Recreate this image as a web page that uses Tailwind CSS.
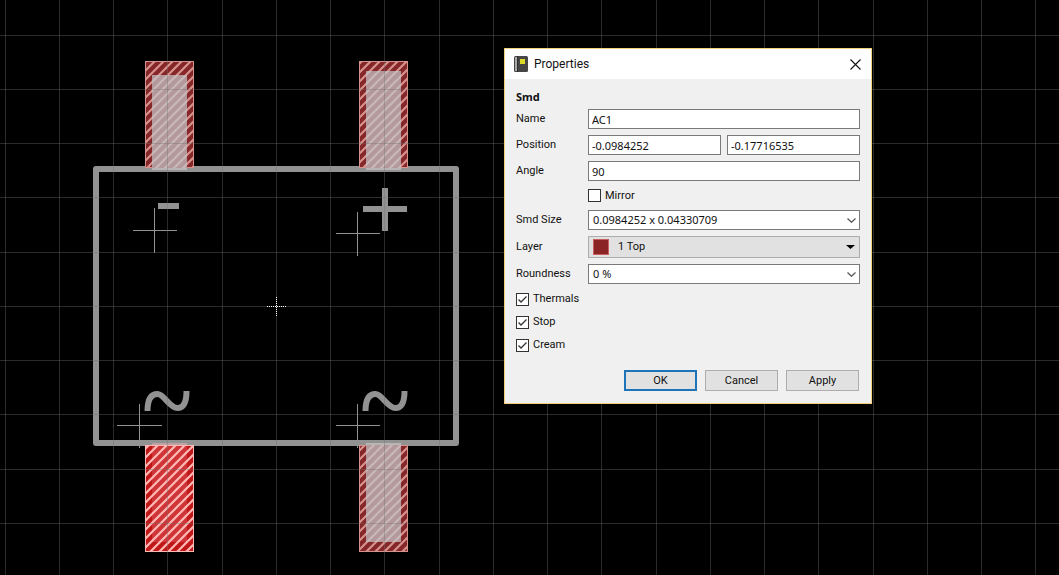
<!DOCTYPE html>
<html lang="en">
<head>
<meta charset="utf-8">
<meta name="viewport" content="width=device-width, initial-scale=1">
<title>Properties</title>
<script src="https://cdn.jsdelivr.net/npm/@tailwindcss/browser@4"></script>
</head>
<body class="relative min-h-screen overflow-hidden bg-black font-[Roboto,sans-serif] text-[11px] leading-4 text-[#111]">
<svg class="absolute inset-0 h-full w-full" role="img" aria-label="Footprint canvas">
  <defs>
    <pattern id="hatch" width="9" height="9" patternUnits="userSpaceOnUse">
      <path d="M-2 11L11 -2M-2 2L2 -2M7 11L11 7" stroke="#d6928d" stroke-width="2.200"/>
    </pattern>
    <pattern id="hatchSel" width="9" height="9" patternUnits="userSpaceOnUse">
      <path d="M-2 11L11 -2M-2 2L2 -2M7 11L11 7" stroke="#ffb9b4" stroke-width="2.200"/>
    </pattern>
    <pattern id="hatchPaste" width="9" height="9" patternUnits="userSpaceOnUse">
      <path d="M-2 11L11 -2M-2 2L2 -2M7 11L11 7" stroke="#c9b8b9" stroke-width="2.200"/>
    </pattern>
  </defs>
  <!-- package outline -->
  <rect x="96" y="169" width="360" height="274" fill="none" stroke="#929292" stroke-width="6" stroke-linejoin="round"/>
  <!-- unselected pads -->
  <g stroke="#d6928d">
    <g fill="#852629"><rect x="145.500" y="61.500" width="48" height="106"/><rect x="359.500" y="61.500" width="48" height="106"/><rect x="359.500" y="445.500" width="48" height="106"/></g>
    <g fill="url(#hatch)"><rect x="145.500" y="61.500" width="48" height="106"/><rect x="359.500" y="61.500" width="48" height="106"/><rect x="359.500" y="445.500" width="48" height="106"/></g>
  </g>
  <g fill="#b3999c"><rect x="152" y="75" width="35" height="93"/><rect x="366" y="71" width="35" height="97"/><rect x="366" y="445" width="35" height="97"/></g>
  <g fill="url(#hatchPaste)"><rect x="152" y="75" width="35" height="93"/><rect x="366" y="71" width="35" height="97"/><rect x="366" y="445" width="35" height="97"/></g>
  <g fill="#b9b5b5"><rect x="152" y="168" width="35" height="2"/><rect x="366" y="168" width="35" height="2"/><rect x="366" y="443" width="35" height="2"/></g>
  <!-- selected pad -->
  <rect x="145" y="445" width="49" height="107" fill="#c01719"/>
  <rect x="152" y="445" width="35" height="97" fill="#cf3538"/>
  <rect x="152" y="443" width="35" height="2" fill="#bda3a3"/>
  <rect x="145.500" y="445.500" width="48" height="106" fill="url(#hatchSel)" stroke="#ffb9b4"/>
  <!-- polarity marks -->
  <path d="M158 206H179M385 188V231M363 209H407" stroke="#929292" stroke-width="6"/>
  <g fill="none" stroke="#929292" stroke-width="6">
    <path id="ac" d="M147.500 411C147.500 400 151 394 157.500 394C164 394 169.500 408 177.500 408C183.500 408 186.500 402 186.500 391"/>
    <use href="#ac" x="218"/>
  </g>
  <!-- text origins -->
  <path d="M133 230.500H177M154.500 208V253M336 233.500H380M357.500 212V256M117 425.500H162M139.500 404V448M336 425.500H380M357.500 404V448" stroke="#929292" fill="none"/>
  <!-- grid -->
  <g fill="#707070" fill-opacity=".38" id="grid"></g>
  <path d="M267 306.500H286M276.500 297V316" stroke="#fff" stroke-dasharray="1 1"/>
</svg>
<script>
  const grid = document.getElementById('grid');
  const line = (x, y, w, h) => {
    const r = document.createElementNS('http://www.w3.org/2000/svg', 'rect');
    r.setAttribute('x', x); r.setAttribute('y', y);
    r.setAttribute('width', w); r.setAttribute('height', h);
    grid.appendChild(r);
  };
  for (let i = 0; i < 60; i++) line(Math.floor(5.2 + 54.25 * i), 0, 1, '100%');
  for (let i = 0; i < 40; i++) line(0, Math.floor(35.2 + 54.25 * i), '100%', 1);
</script>

<main role="dialog" aria-labelledby="title" class="absolute top-12 left-[504px] w-[368px] border border-[#f0cf77] bg-[#f0f0f0]">
  <header class="flex h-[30px] items-center bg-white pl-[9px] pr-2.5">
    <svg class="h-4 w-3.5" viewBox="0 0 14 16" aria-hidden="true">
      <rect width="14" height="16" rx="1.500" fill="#454545"/><path d="M1 1H3V15H1Z" fill="#aaa"/><path d="M3 0H4V16H3Z" fill="#2d2d2d"/><rect x="6" y="3" width="5" height="5" fill="#dcdc28"/>
    </svg>
    <h1 id="title" class="ml-1.5 flex-1 text-xs">Properties</h1>
    <button aria-label="Close" class="p-0"><svg class="size-[11px]" viewBox="0 0 11 11"><path d="M.5 .5L10.500 10.500M10.500 .5L.5 10.500" stroke="#111" stroke-width="1.100"/></svg></button>
  </header>
  <form class="px-[11px] pt-2.5 pb-3" onsubmit="return false">
    <h2 class="mb-1 h-4 font-['Noto_Sans',sans-serif] font-bold">Smd</h2>
    <div class="grid grid-cols-[72px_minmax(0,1fr)] items-center gap-y-1.5">
      <label for="name">Name</label>
      <input id="name" value="AC1" class="h-5 w-full min-w-0 border border-[#7a7a7a] bg-white px-[3px] font-['Noto_Sans',sans-serif]">
      <label for="px">Position</label>
      <div class="flex gap-1.5">
        <input id="px" value="-0.0984252" class="h-5 min-w-0 flex-1 border border-[#7a7a7a] bg-white px-[3px] font-['Noto_Sans',sans-serif]">
        <input aria-label="Position Y" value="-0.17716535" class="h-5 min-w-0 flex-1 border border-[#7a7a7a] bg-white px-[3px] font-['Noto_Sans',sans-serif]">
      </div>
      <label for="angle">Angle</label>
      <input id="angle" value="90" class="h-5 w-full min-w-0 border border-[#7a7a7a] bg-white px-[3px] font-['Noto_Sans',sans-serif]">
      <label class="col-start-2 flex h-[17px] items-center gap-1"><input type="checkbox" class="size-[13px] appearance-none border border-[#333] bg-white">Mirror</label>
      <label for="size">Smd Size</label>
      <div class="relative">
        <select id="size" class="block h-5 w-full appearance-none border border-[#7a7a7a] bg-white px-1 font-['Noto_Sans',sans-serif]"><option>0.0984252 x 0.04330709</option></select>
        <svg class="pointer-events-none absolute top-2 right-1 h-[5px] w-[9px]" viewBox="0 0 9 5"><path d="M.5 .5L4.500 4.300L8.500 .5" fill="none" stroke="#555" stroke-width="1.200"/></svg>
      </div>
      <label for="layer">Layer</label>
      <div class="relative">
        <select id="layer" class="block h-[22px] w-full appearance-none border border-[#adadad] bg-[#e1e1e1] pr-5 pl-[29px]"><option>1 Top</option></select>
        <span class="pointer-events-none absolute top-[3px] left-[5px] size-4 border border-[#c9605f] bg-[#8a2425]"></span>
        <svg class="pointer-events-none absolute top-[9px] right-[5px] h-1 w-[9px]" viewBox="0 0 9 4"><path d="M0 0H9L4.500 4Z" fill="#000"/></svg>
      </div>
      <label for="round">Roundness</label>
      <div class="relative">
        <select id="round" class="block h-5 w-full appearance-none border border-[#7a7a7a] bg-white px-1 font-['Noto_Sans',sans-serif]"><option>0 %</option></select>
        <svg class="pointer-events-none absolute top-2 right-1 h-[5px] w-[9px]" viewBox="0 0 9 5"><path d="M.5 .5L4.500 4.300L8.500 .5" fill="none" stroke="#555" stroke-width="1.200"/></svg>
      </div>
    </div>
    <div class="mt-[7px] flex flex-col items-start gap-[7px]">
      <label class="flex items-center gap-1"><span class="relative flex"><input type="checkbox" checked class="peer size-[13px] appearance-none border border-[#333] bg-white"><svg class="pointer-events-none absolute inset-0 hidden size-[13px] peer-checked:block" viewBox="0 0 13 13"><path d="M2.500 6.500L5 9L10.500 3.500" fill="none" stroke="#333" stroke-width="1.300"/></svg></span>Thermals</label>
      <label class="flex items-center gap-1"><span class="relative flex"><input type="checkbox" checked class="peer size-[13px] appearance-none border border-[#333] bg-white"><svg class="pointer-events-none absolute inset-0 hidden size-[13px] peer-checked:block" viewBox="0 0 13 13"><path d="M2.500 6.500L5 9L10.500 3.500" fill="none" stroke="#333" stroke-width="1.300"/></svg></span>Stop</label>
      <label class="flex items-center gap-1"><span class="relative flex"><input type="checkbox" checked class="peer size-[13px] appearance-none border border-[#333] bg-white"><svg class="pointer-events-none absolute inset-0 hidden size-[13px] peer-checked:block" viewBox="0 0 13 13"><path d="M2.500 6.500L5 9L10.500 3.500" fill="none" stroke="#333" stroke-width="1.300"/></svg></span>Cream</label>
    </div>
    <div class="mt-[17px] flex justify-end gap-2 pr-px">
      <button class="h-[21px] w-[73px] border-2 border-[#1d74b8] bg-[#e1e1e1]">OK</button>
      <button class="h-[21px] w-[73px] border border-[#adadad] bg-[#e1e1e1]">Cancel</button>
      <button class="h-[21px] w-[73px] border border-[#adadad] bg-[#e1e1e1]">Apply</button>
    </div>
  </form>
</main>
</body>
</html>
